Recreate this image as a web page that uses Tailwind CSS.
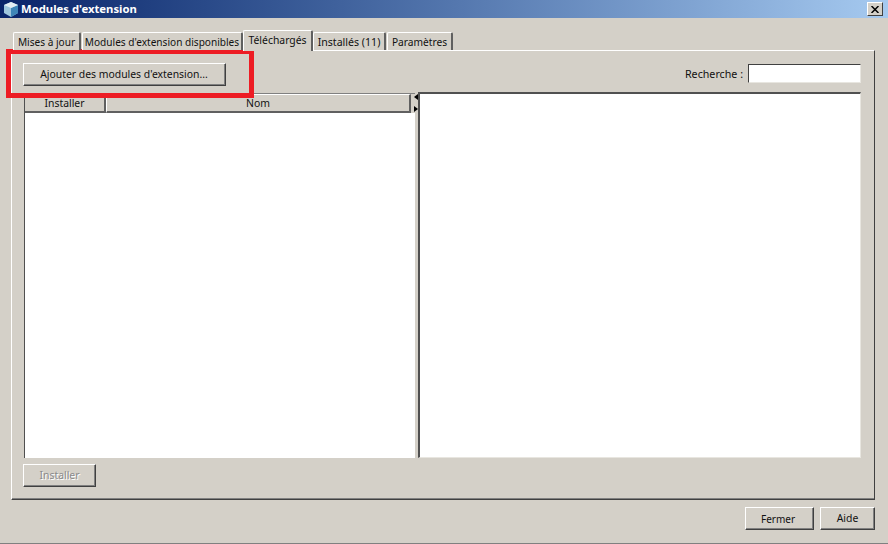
<!DOCTYPE html>
<html lang="fr">
<head>
    <meta charset="UTF-8">
    <title>Modules d'extension</title>
    <script src="https://cdn.jsdelivr.net/npm/@tailwindcss/browser@4"></script>
</head>
<body class="w-[888px] h-[544px] overflow-hidden bg-[#d4d0c8] font-['Noto_Sans',sans-serif] text-[10.4px] leading-none text-[#111] relative flex flex-col border-b border-b-[#808080]">
    <!-- Title bar -->
    <div class="h-[18px] flex items-center pl-1 pr-[5px] bg-gradient-to-r from-[#0a246a] to-[#a6caf0]">
        <svg class="w-[14px] h-[15px]" viewBox="0 0 14 15">
            <path d="M7 0L14 3V11L7 15L0 11V3Z" fill="#9fc6de"/>
            <path d="M7 6L14 3V11L7 15Z" fill="#3f86b8"/>
            <path d="M7 0L14 3L7 6L0 3Z" fill="#e4eef4"/>
        </svg>
        <span class="ml-[3px] text-white font-bold text-[11.3px]">Modules d'extension</span>
        <div class="ml-auto w-4 h-[14px] flex items-center justify-center bg-[#d4d0c8] border border-t-white border-l-white border-r-[#404040] border-b-[#404040]">
            <svg class="w-2 h-[7px]" viewBox="0 0 8 7"><path d="M0.5 0L7.5 7M7.5 0L0.5 7" stroke="#000" stroke-width="1.5"/></svg>
        </div>
    </div>

    <!-- Tabs -->
    <div class="h-[33px] pl-[13px] flex items-end relative z-10 mb-[-1px]">
        <div class="w-[68px] h-[18px] mb-px pt-px text-[10.1px] flex items-center justify-center whitespace-nowrap bg-[#d4d0c8] border-t border-l border-r-2 border-t-white border-l-white border-r-[#606060] rounded-t-[2px]">Mises à jour</div>
        <div class="w-[161px] h-[18px] mb-px pt-px ml-px text-[10.1px] flex items-center justify-center whitespace-nowrap bg-[#d4d0c8] border-t border-l border-r-2 border-t-white border-l-white border-r-[#606060] rounded-t-[2px]">Modules d'extension disponibles</div>
        <div class="w-[70px] h-[21px] pb-[2px] flex items-center justify-center whitespace-nowrap bg-[#d4d0c8] border-t border-l border-r-2 border-t-white border-l-white border-r-[#606060] rounded-t-[2px]">Téléchargés</div>
        <div class="w-[73px] h-[18px] mb-px pt-px text-[10.6px] flex items-center justify-center whitespace-nowrap bg-[#d4d0c8] border-t border-l border-r-2 border-t-white border-l-white border-r-[#606060] rounded-t-[2px]">Installés (11)</div>
        <div class="w-[66px] h-[18px] mb-px pt-px ml-px text-[10.2px] flex items-center justify-center whitespace-nowrap bg-[#d4d0c8] border-t border-l border-r-2 border-t-white border-l-white border-r-[#606060] rounded-t-[2px]">Paramètres</div>
    </div>

    <!-- Panel -->
    <div class="mx-[11px] mr-[13px] h-[450px] flex flex-col pt-[12px] pl-[11px] pr-[13px] border border-t-white border-l-white border-r-[#404040] border-b-[#404040] shadow-[inset_0_-1px_0_#808080]">
        <div class="h-[23px] flex items-center">
            <button class="w-[203px] h-[23px] pr-px bg-[#d4d0c8] border border-t-white border-l-white border-r-[#404040] border-b-[#404040] shadow-[inset_-1px_-1px_0_#808080]">Ajouter des modules d'extension...</button>
            <span class="ml-auto text-[10.7px]">Recherche :</span>
            <div class="ml-[5px] w-[113px] h-[19px] mt-[-2px] bg-white border border-t-[#404040] border-l-[#404040] border-r-[#e8e6e0] border-b-[#e8e6e0]"></div>
        </div>
        <div class="mt-[7px] h-[365px] flex">
            <!-- Table -->
            <div class="w-[391px] ml-px bg-white border-l border-t border-t-[#808080] border-l-[#505050]">
                <div class="flex h-[19px] pr-[4px] bg-[#d4d0c8]">
                    <div class="w-[81px] flex items-center justify-center bg-[#d4d0c8] border-r-2 border-b-2 border-r-[#606060] border-b-[#606060] border-t border-t-white">Installer</div>
                    <div class="flex-1 flex items-center justify-center bg-[#d4d0c8] border-r-2 border-b-2 border-r-[#606060] border-b-[#606060] border-t border-t-white border-l border-l-white">Nom</div>
                </div>
            </div>
            <!-- Splitter -->
            <div class="w-[2px] relative">
                <svg class="absolute left-[-1px] top-0 w-[4px] h-[20px]" viewBox="0 0 4 20">
                    <path d="M4 1V7L0 4Z" fill="#000"/>
                    <path d="M0 13V19L4 16Z" fill="#000"/>
                </svg>
            </div>
            <!-- Detail pane -->
            <div class="w-[443px] h-[366px] mt-[-1px] ml-px bg-white border-l-2 border-t-2 border-r border-b border-t-[#505050] border-l-[#505050] border-r-[#e8e6e0] border-b-[#e8e6e0]"></div>
        </div>
        <button class="mt-[6px] w-[73px] h-[23px] text-[#8a8a8a] [text-shadow:1px_1px_0_#fff] bg-[#d4d0c8] border border-t-white border-l-white border-r-[#404040] border-b-[#404040] shadow-[inset_-1px_-1px_0_#808080]">Installer</button>
    </div>

    <!-- Footer buttons -->
    <div class="mt-[7px] pr-[13px] flex justify-end gap-[6px]">
        <button class="w-[69px] h-[23px] pr-[3px] text-[10px] bg-[#d4d0c8] border border-t-white border-l-white border-r-[#404040] border-b-[#404040] shadow-[inset_-1px_-1px_0_#808080]">Fermer</button>
        <button class="w-[55px] h-[23px] bg-[#d4d0c8] border border-t-white border-l-white border-r-[#404040] border-b-[#404040] shadow-[inset_-1px_-1px_0_#808080]">Aide</button>
    </div>

    <!-- Red highlight over the add button -->
    <div class="absolute left-[6px] top-[49px] w-[248px] h-[49px] border-[5px] border-[#ed1c24]"></div>
</body>
</html>
